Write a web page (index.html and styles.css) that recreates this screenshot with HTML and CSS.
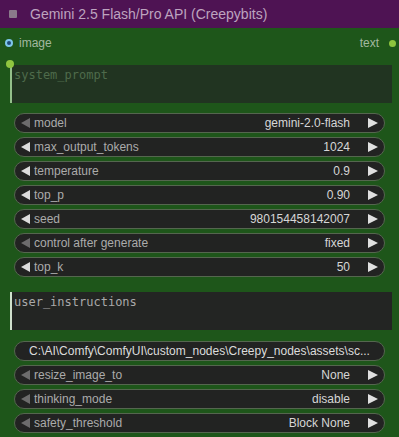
FILE: index.html
```html
<!DOCTYPE html>
<html>
<head>
<meta charset="utf-8">
<link rel="stylesheet" href="styles.css">
</head>
<body>
<div class="node">
  <div class="title">
    <span class="title-icon"></span>
    <span class="title-text">Gemini 2.5 Flash/Pro API (Creepybits)</span>
  </div>
  <div class="io">
    <div class="io-in"><span class="dot-in"></span><span>image</span></div>
    <div class="io-out"><span>text</span><span class="dot-out"></span></div>
  </div>
  <div class="textarea ta-linked">
    <span class="link-dot"></span>
    <span class="ta-text">system_prompt</span>
  </div>
  <div class="widgets first">
    <div class="widget"><span class="arr-l dim"></span><span class="label">model</span><span class="value">gemini-2.0-flash</span><span class="arr-r"></span></div>
    <div class="widget"><span class="arr-l"></span><span class="label">max_output_tokens</span><span class="value">1024</span><span class="arr-r"></span></div>
    <div class="widget"><span class="arr-l"></span><span class="label">temperature</span><span class="value">0.9</span><span class="arr-r"></span></div>
    <div class="widget"><span class="arr-l"></span><span class="label">top_p</span><span class="value">0.90</span><span class="arr-r"></span></div>
    <div class="widget"><span class="arr-l"></span><span class="label">seed</span><span class="value">980154458142007</span><span class="arr-r"></span></div>
    <div class="widget"><span class="arr-l dim"></span><span class="label">control after generate</span><span class="value">fixed</span><span class="arr-r"></span></div>
    <div class="widget"><span class="arr-l"></span><span class="label">top_k</span><span class="value">50</span><span class="arr-r"></span></div>
  </div>
  <div class="textarea ta-user">
    <span class="ta-text">user_instructions</span>
  </div>
  <div class="widgets second">
    <div class="widget button">C:\AI\Comfy\ComfyUI\custom_nodes\Creepy_nodes\assets\sc...</div>
    <div class="widget"><span class="arr-l dim"></span><span class="label">resize_image_to</span><span class="value">None</span><span class="arr-r"></span></div>
    <div class="widget"><span class="arr-l dim"></span><span class="label">thinking_mode</span><span class="value">disable</span><span class="arr-r"></span></div>
    <div class="widget"><span class="arr-l dim"></span><span class="label">safety_threshold</span><span class="value">Block None</span><span class="arr-r"></span></div>
  </div>
</div>
</body>
</html>
```

FILE: styles.css
```css
* { box-sizing: border-box; }
html, body {
  margin: 0;
  padding: 0;
  background: #1e561a;
  font-family: "Liberation Sans", Arial, sans-serif;
  font-size: 12px;
}
.node {
  width: 399px;
  height: 437px;
  background: #1e561a;
  overflow: hidden;
}
.title {
  height: 28px;
  background: #4e1353;
  display: flex;
  align-items: center;
  padding-left: 9px;
}
.title-icon {
  width: 8px;
  height: 8px;
  background: #8a7a8a;
  border-radius: 1px;
}
.title-text {
  margin-left: 13px;
  font-size: 14px;
  color: #bda3bf;
}
.io {
  height: 20px;
  margin-top: 5px;
  display: flex;
  justify-content: space-between;
  align-items: center;
  color: #a3b8a0;
  padding: 0 3px 0 5px;
}
.io-in, .io-out {
  display: flex;
  align-items: center;
}
.dot-in {
  width: 8px;
  height: 8px;
  border-radius: 50%;
  background: #1f4a7a;
  border: 2px solid #7ec6ea;
  margin-right: 6px;
}
.dot-out {
  width: 7px;
  height: 7px;
  border-radius: 50%;
  background: #8ec43e;
  margin-left: 10px;
}
.textarea {
  position: relative;
  margin: 12px 7px 0 10px;
  height: 38px;
  border-left: 2px solid #93c08a;
  font-family: "DejaVu Sans Mono", "Liberation Mono", monospace;
  font-size: 12px;
  padding: 3px 0 0 2px;
}
.ta-linked {
  background: #213421;
  color: #4e6b4b;
}
.ta-user {
  margin-top: 15px;
  background: #232523;
  color: #a9a9a9;
  border-left-color: #cfe0cc;
}
.link-dot {
  position: absolute;
  left: -6px;
  top: -5px;
  width: 8px;
  height: 8px;
  border-radius: 50%;
  background: #90c540;
}
.widgets {
  display: flex;
  flex-direction: column;
  gap: 4px;
  padding: 0 14px 0 14px;
}
.first { margin-top: 10px; }
.second { margin-top: 11px; }
.widget {
  height: 20px;
  border-radius: 10px;
  background: #222322;
  border: 1px solid #55664f;
  display: flex;
  align-items: center;
  padding: 0 6px 0 6px;
  color: #ababab;
  white-space: nowrap;
}
.button {
  justify-content: center;
  color: #dcdcdc;
}
.arr-l {
  width: 0;
  height: 0;
  border-top: 5px solid transparent;
  border-bottom: 5px solid transparent;
  border-right: 9px solid #dcdcdc;
  margin-right: 4px;
}
.arr-l.dim { border-right-color: #6c6c6c; }
.label { flex: 1; }
.value {
  color: #d6d6d6;
  margin-right: 18px;
}
.arr-r {
  width: 0;
  height: 0;
  border-top: 5px solid transparent;
  border-bottom: 5px solid transparent;
  border-left: 10px solid #e0e0e0;
}
```
